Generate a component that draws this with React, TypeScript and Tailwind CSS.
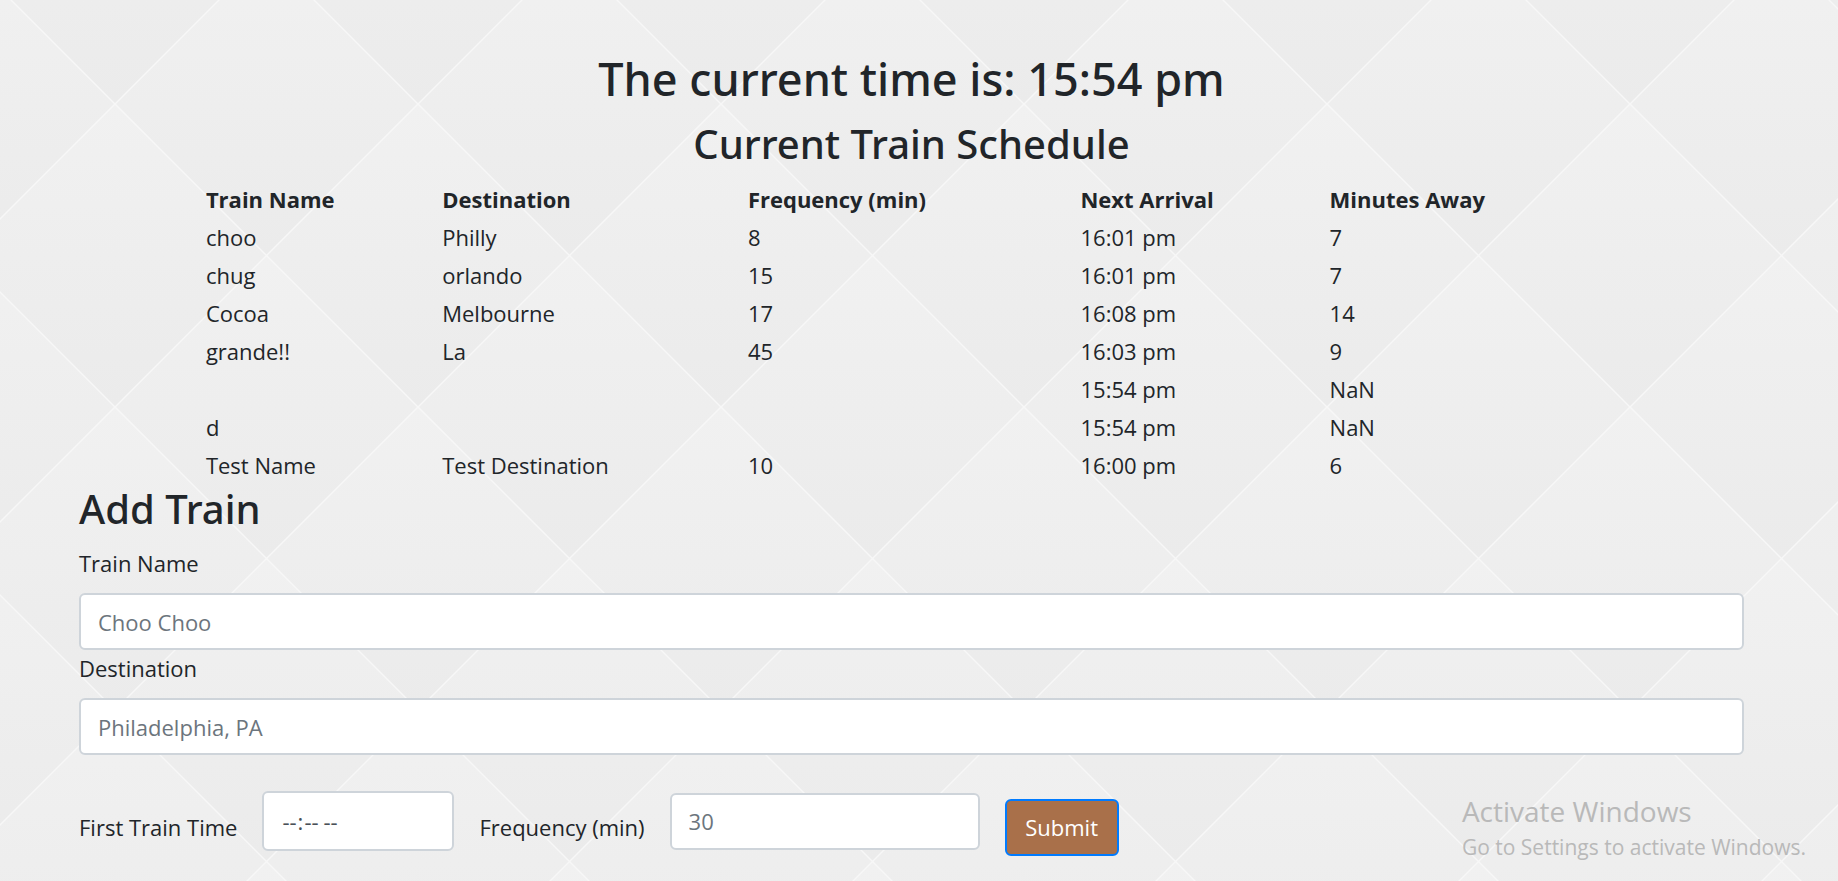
const trains = [
  { name: "choo", destination: "Philly", frequency: "8", arrival: "16:01 pm", away: "7" },
  { name: "chug", destination: "orlando", frequency: "15", arrival: "16:01 pm", away: "7" },
  { name: "Cocoa", destination: "Melbourne", frequency: "17", arrival: "16:08 pm", away: "14" },
  { name: "grande!!", destination: "La", frequency: "45", arrival: "16:03 pm", away: "9" },
  { name: "", destination: "", frequency: "", arrival: "15:54 pm", away: "NaN" },
  { name: "d", destination: "", frequency: "", arrival: "15:54 pm", away: "NaN" },
  { name: "Test Name", destination: "Test Destination", frequency: "10", arrival: "16:00 pm", away: "6" },
];

const fieldClass =
  "rounded-md border-2 border-[#ced4da] bg-white text-[22px] leading-[36px] text-[#495057] placeholder:text-[#6c757d] placeholder:opacity-100";

function DiamondBackdrop() {
  return (
    <svg className="absolute inset-0 -z-10 h-full w-full" aria-hidden="true">
      <defs>
        <linearGradient id="shade" x1="0" y1="0" x2="0" y2="1">
          <stop offset="0" stopColor="#f1f1f1" />
          <stop offset="0.5" stopColor="#eeeeee" />
          <stop offset="1" stopColor="#ebebeb" />
        </linearGradient>
        <pattern id="diamonds" x="115" y="104" width="303" height="303" patternUnits="userSpaceOnUse">
          <path d="M151.5 -151.5L303 0L151.5 151.5L0 0Z" fill="url(#shade)" />
          <path d="M151.5 151.5L303 303L151.5 454.5L0 303Z" fill="url(#shade)" />
          <path d="M0 0L151.5 151.5L0 303L-151.5 151.5Z" fill="url(#shade)" />
          <path d="M303 0L454.5 151.5L303 303L151.5 151.5Z" fill="url(#shade)" />
          <path d="M-2 -2L305 305M305 -2L-2 305" stroke="#f7f7f7" strokeWidth="1.5" />
        </pattern>
      </defs>
      <rect width="100%" height="100%" fill="url(#diamonds)" />
    </svg>
  );
}

function TextField({ id, label, placeholder }: { id: string; label: string; placeholder: string }) {
  return (
    <div className="flex flex-col gap-3">
      <label htmlFor={id}>{label}</label>
      <input id={id} type="text" placeholder={placeholder} className={`${fieldClass} h-[57px] w-full px-[17px]`} />
    </div>
  );
}

export default function App() {
  return (
    <div className="relative isolate min-h-screen overflow-hidden pb-4 pl-[79px] pr-[94px] pt-[50px] font-['Open_Sans','Noto_Sans',sans-serif] text-[22px] leading-[36px] text-[#212529]">
      <DiamondBackdrop />
      <main>
        <h1 className="mb-3 text-center font-['Noto_Sans',sans-serif] text-[45px] font-medium leading-[58px]">
          The current time is: 15:54 pm
        </h1>
        <section className="mb-px">
          <h2 className="mb-3 text-center font-['Noto_Sans',sans-serif] text-[40px] font-medium leading-[48px]">
            Current Train Schedule
          </h2>
          <table className="mx-auto w-[85%] table-fixed border-collapse text-left">
            <colgroup>
              <col className="w-[16.7%]" />
              <col className="w-[21.6%]" />
              <col className="w-[23.5%]" />
              <col className="w-[17.6%]" />
              <col className="w-[20.6%]" />
            </colgroup>
            <thead>
              <tr className="h-[38px]">
                <th className="px-0.5 py-px font-bold">Train Name</th>
                <th className="px-0.5 py-px font-bold">Destination</th>
                <th className="px-0.5 py-px font-bold">Frequency (min)</th>
                <th className="px-0.5 py-px font-bold">Next Arrival</th>
                <th className="px-0.5 py-px font-bold">Minutes Away</th>
              </tr>
            </thead>
            <tbody>
              {trains.map((train, i) => (
                <tr key={i} className="h-[38px]">
                  <td className="px-0.5 py-px">{train.name}</td>
                  <td className="px-0.5 py-px">{train.destination}</td>
                  <td className="px-0.5 py-px">{train.frequency}</td>
                  <td className="px-0.5 py-px">{train.arrival}</td>
                  <td className="px-0.5 py-px">{train.away}</td>
                </tr>
              ))}
            </tbody>
          </table>
        </section>
        <section>
          <h2 className="mb-3 font-['Noto_Sans',sans-serif] text-[40px] font-medium leading-[48px]">Add Train</h2>
          <form onSubmit={(e) => e.preventDefault()}>
            <TextField id="train-name" label="Train Name" placeholder="Choo Choo" />
            <TextField id="destination" label="Destination" placeholder="Philadelphia, PA" />
            <div className="mt-9 flex flex-wrap items-center gap-x-[25px]">
              <label htmlFor="first-time">First Train Time</label>
              <input
                id="first-time"
                type="time"
                className={`${fieldClass} mb-3 h-[60px] w-48 px-[17px] [&::-webkit-calendar-picker-indicator]:hidden`}
              />
              <label htmlFor="frequency">Frequency (min)</label>
              <input
                id="frequency"
                type="text"
                placeholder="30"
                className={`${fieldClass} mb-3 h-[57px] w-[310px] px-[17px]`}
              />
              <button
                type="submit"
                className="h-[57px] min-w-[114px] rounded-md border-2 border-[#007bff] bg-[#a9704a] px-[18px] text-white"
              >
                Submit
              </button>
            </div>
          </form>
        </section>
      </main>
      <aside className="pointer-events-none absolute bottom-5 right-8 text-[#b9b9b9]">
        <p className="mb-1 text-[28px] leading-[36px]">Activate Windows</p>
        <p className="text-[21px] leading-[28px]">Go to Settings to activate Windows.</p>
      </aside>
    </div>
  );
}
